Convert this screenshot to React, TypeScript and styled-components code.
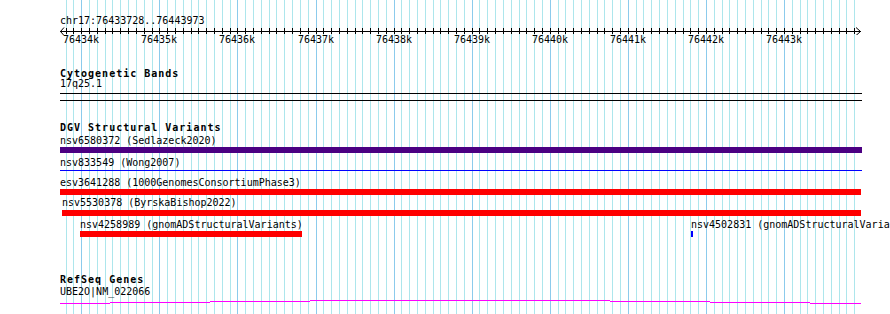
import React from "react";
import styled, { createGlobalStyle } from "styled-components";

const VIEW_START = 76433728;
const VIEW_END = 76443973;
const ORIGIN = 60;
const WIDTH = 800;
const SCALE = WIDTH / (VIEW_END - VIEW_START);

const toX = (bp: number) => Math.round(ORIGIN + (bp - VIEW_START) * SCALE);

const GlobalStyle = createGlobalStyle`
  html, body {
    margin: 0;
    padding: 0;
    background: #fff;
    overflow: hidden;
  }
`;

const Page = styled.div`
  position: relative;
  width: 890px;
  height: 314px;
  overflow: hidden;
  background: #fff;
  color: #000;
  font-family: "DejaVu Sans Mono", "Liberation Mono", monospace;
  font-size: 10px;
  line-height: 10px;
`;

const GridLayer = styled.svg`
  position: absolute;
  top: 0;
  left: 0;
  z-index: 0;
`;

const Content = styled.div`
  position: relative;
  z-index: 1;
  display: flex;
  flex-direction: column;
  padding: 16px 0 0 ${ORIGIN}px;
`;

const Text = styled.div`
  height: 10px;
  white-space: nowrap;
`;

const Title = styled.div<{ $gap: number }>`
  margin-top: ${(p) => p.$gap}px;
  height: 10px;
  font-weight: bold;
  letter-spacing: 1px;
  white-space: nowrap;
`;

const Axis = styled.svg`
  display: block;
`;

const TickLabels = styled.div`
  position: relative;
  height: 10px;
`;

const TickLabel = styled.span`
  position: absolute;
  top: 0;
  white-space: nowrap;
`;

const BandBox = styled.div`
  margin-top: 4px;
  width: 802px;
  height: 8px;
  box-sizing: border-box;
  border-top: 1px solid #000;
  border-bottom: 1px solid #000;
`;

const FeatureRow = styled.div<{ $gap: number; $height: number }>`
  position: relative;
  margin-top: ${(p) => p.$gap}px;
  height: ${(p) => p.$height}px;
`;

const Feature = styled.div`
  position: absolute;
  top: 0;
  display: flex;
  flex-direction: column;
`;

const Bar = styled.div<{ $color: string; $h: number; $gap: number }>`
  margin-top: ${(p) => p.$gap}px;
  height: ${(p) => p.$h}px;
  background: ${(p) => p.$color};
`;

const GeneLine = styled.svg`
  display: block;
  margin-top: 2px;
`;

type Feat = {
  x: number;
  w: number;
  label: string;
  color: string;
  h: number;
  gap: number;
};

type Row = { gap: number; height: number; feats: Feat[] };

const dgvRows: Row[] = [
  {
    gap: 3,
    height: 17,
    feats: [{ x: 0, w: 802, label: "nsv6580372 (Sedlazeck2020)", color: "#4b0082", h: 6, gap: 1 }],
  },
  {
    gap: 5,
    height: 13,
    feats: [{ x: 0, w: 802, label: "nsv833549 (Wong2007)", color: "#0000ff", h: 1, gap: 2 }],
  },
  {
    gap: 7,
    height: 17,
    feats: [
      { x: 0, w: 801, label: "esv3641288 (1000GenomesConsortiumPhase3)", color: "#ff0000", h: 6, gap: 1 },
    ],
  },
  {
    gap: 3,
    height: 18,
    feats: [{ x: 2, w: 799, label: "nsv5530378 (ByrskaBishop2022)", color: "#ff0000", h: 6, gap: 2 }],
  },
  {
    gap: 4,
    height: 17,
    feats: [
      { x: 20, w: 222, label: "nsv4258989 (gnomADStructuralVariants)", color: "#ff0000", h: 6, gap: 1 },
      { x: 631, w: 2, label: "nsv4502831 (gnomADStructuralVariants)", color: "#0000ff", h: 6, gap: 1 },
    ],
  },
];

const minorTicks: number[] = [];
for (let bp = 76433800; bp < VIEW_END; bp += 100) minorTicks.push(bp);

const geneSteps = [
  [0, 50, 4],
  [50, 150, 3],
  [150, 250, 2],
  [250, 550, 1],
  [550, 650, 2],
  [650, 750, 3],
  [750, 801, 4],
];

const Grid = () => (
  <GridLayer width={890} height={314} shapeRendering="crispEdges">
    {minorTicks.map((bp) => {
      const major = bp % 1000 === 0;
      const x = toX(bp) + 0.5;
      return (
        <line
          key={bp}
          x1={x}
          x2={x}
          y1={0}
          y2={314}
          stroke={major ? "#8ccbec" : "#ade6ec"}
          strokeWidth={1}
        />
      );
    })}
  </GridLayer>
);

const Ruler = () => (
  <>
    <Text>chr17:76433728..76443973</Text>
    <Axis width={802} height={9} shapeRendering="crispEdges">
      <line x1={0} x2={801} y1={5.5} y2={5.5} stroke="#000" />
      {minorTicks.map((bp) => {
        const x = toX(bp) - ORIGIN + 0.5;
        return <line key={bp} x1={x} x2={x} y1={2} y2={8} stroke="#000" />;
      })}
      <polyline points="4,1.5 0.5,5.5 4,9.5" fill="none" stroke="#000" shapeRendering="auto" />
      <polyline points="796,1.5 800.5,5.5 796,9.5" fill="none" stroke="#000" shapeRendering="auto" />
    </Axis>
    <TickLabels>
      {minorTicks
        .filter((bp) => bp % 1000 === 0)
        .map((bp) => (
          <TickLabel key={bp} style={{ left: toX(bp) - ORIGIN - 18 }}>
            {bp / 1000}k
          </TickLabel>
        ))}
    </TickLabels>
  </>
);

export default function App() {
  return (
    <Page>
      <GlobalStyle />
      <Grid />
      <Content>
        <Ruler />

        <Title $gap={24}>Cytogenetic Bands</Title>
        <Text>17q25.1</Text>
        <BandBox />

        <Title $gap={22}>DGV Structural Variants</Title>
        {dgvRows.map((row, i) => (
          <FeatureRow key={i} $gap={row.gap} $height={row.height}>
            {row.feats.map((f) => (
              <Feature key={f.label} style={{ left: f.x }}>
                <Text>{f.label}</Text>
                <Bar $color={f.color} $h={f.h} $gap={f.gap} style={{ width: f.w }} />
              </Feature>
            ))}
          </FeatureRow>
        ))}

        <Title $gap={38}>RefSeq Genes</Title>
        <Text style={{ marginTop: 2 }}>UBE2O|NM_022066</Text>
        <GeneLine width={802} height={6} shapeRendering="crispEdges">
          {geneSteps.map(([a, b, y]) => (
            <rect key={a} x={a} y={y} width={b - a} height={1} fill="#ff00ff" />
          ))}
        </GeneLine>
      </Content>
    </Page>
  );
}
